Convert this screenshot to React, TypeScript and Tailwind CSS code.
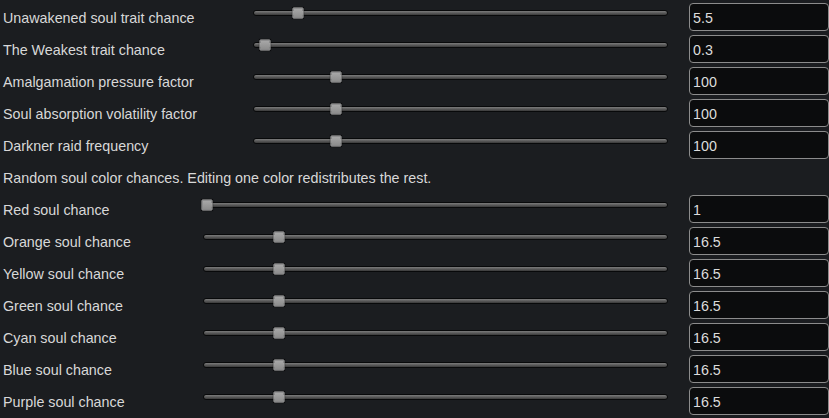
import React from "react";

type Row = { label: string; value: string; thumb: number };

const topRows: Row[] = [
  { label: "Unawakened soul trait chance", value: "5.5", thumb: 44 },
  { label: "The Weakest trait chance", value: "0.3", thumb: 11 },
  { label: "Amalgamation pressure factor", value: "100", thumb: 82 },
  { label: "Soul absorption volatility factor", value: "100", thumb: 82 },
  { label: "Darkner raid frequency", value: "100", thumb: 82 },
];

const colorRows: Row[] = [
  { label: "Red soul chance", value: "1", thumb: 3 },
  { label: "Orange soul chance", value: "16.5", thumb: 75 },
  { label: "Yellow soul chance", value: "16.5", thumb: 75 },
  { label: "Green soul chance", value: "16.5", thumb: 75 },
  { label: "Cyan soul chance", value: "16.5", thumb: 75 },
  { label: "Blue soul chance", value: "16.5", thumb: 75 },
  { label: "Purple soul chance", value: "16.5", thumb: 75 },
];

function Slider({ thumb, width }: { thumb: number; width: number }) {
  return (
    <div className="relative mb-2 h-[6px] rounded-full border border-[#08090a] bg-gradient-to-b from-[#7c7c7c] via-[#5a5a5a] to-[#3a3a3a]" style={{ width }}>
      {/* thumb */}
      <div
        className="absolute top-1/2 h-[11px] w-[11px] -translate-x-1/2 -translate-y-1/2 rounded-[1px] border border-[#bcbcbc] bg-gradient-to-b from-[#a8a8a8] to-[#8c8c8c] shadow-[0_0_1px_#000]"
        style={{ left: thumb }}
      />
    </div>
  );
}

function SettingRow({ row, labelWidth, trackWidth }: { row: Row; labelWidth: string; trackWidth: number }) {
  return (
    <div className="flex h-8 items-center">
      <div className={`${labelWidth} shrink-0 pl-[3px] pt-[2px] text-[14.3px] leading-[20px] text-[#d8d8d8]`}>{row.label}</div>
      <Slider thumb={row.thumb} width={trackWidth} />
      <div className="ml-auto flex h-7 w-[140px] items-center rounded-[4px] border border-[#8c8c8c] bg-[#0b0c0d] pl-[3px] pt-[2px] text-[14.3px] leading-[20px] text-[#dcdcdc]">
        {row.value}
      </div>
    </div>
  );
}

export default function App() {
  return (
    <div className="h-[418px] w-[829px] overflow-hidden bg-[#1b1d20] pt-[1px] font-['Liberation_Sans',Arial,sans-serif]">
      {topRows.map((r) => (
        <SettingRow key={r.label} row={r} labelWidth="w-[253px]" trackWidth={415} />
      ))}
      <div className="flex h-8 items-center pl-[3px] pt-[2px] text-[14.3px] leading-[20px] text-[#d8d8d8]">
        Random soul color chances. Editing one color redistributes the rest.
      </div>
      {colorRows.map((r) => (
        <SettingRow key={r.label} row={r} labelWidth="w-[203px]" trackWidth={465} />
      ))}
    </div>
  );
}
